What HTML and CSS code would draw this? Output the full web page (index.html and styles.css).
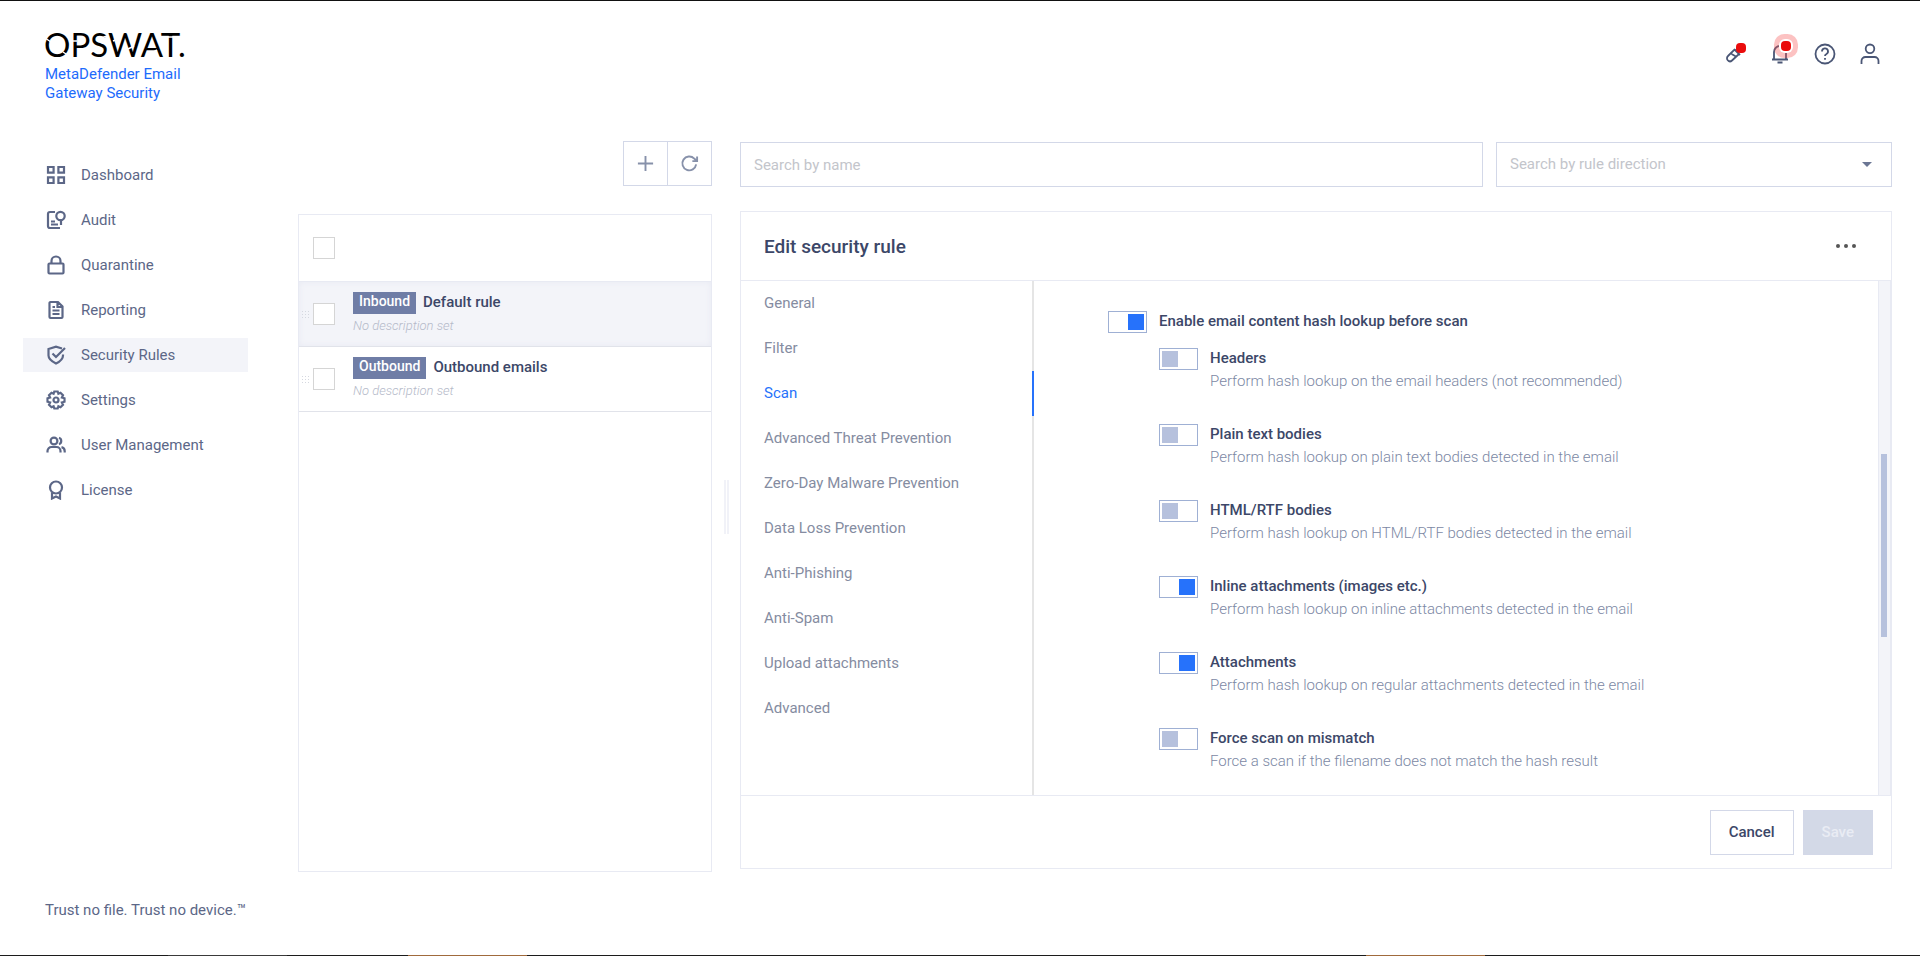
FILE: index.html
```html
<!DOCTYPE html>
<html lang="en">
<head>
    <meta charset="UTF-8">
    <meta name="viewport" content="width=device-width, initial-scale=1.0">
    <title>Security Rules - MetaDefender Email Gateway Security</title>
    <link rel="stylesheet" href="styles.css">
</head>
<body>
    <div class="app">
        <aside class="sidebar">
            <div class="brand">
                <svg class="logo" width="160" height="26" viewBox="0 0 160 26" role="img" aria-label="OPSWAT">
                    <text x="0" y="25">OPSWAT.</text>
                    <path class="cut" d="M1 6l6 4M19 20l6 4M28 9h5M48 18l6-3M57 6l6-2M69 9l7-3M84 17l6-3M106 22l7-4M114 5h18"/>
                </svg>
                <p class="product">MetaDefender Email<br>Gateway Security</p>
            </div>
            <nav class="menu">
                <a href="#">
                    <svg class="icon" viewBox="0 0 20 20"><path d="M2 2h5.600v5.600H2zM12.400 2H18v5.600h-5.600zM2 12.400h5.600V18H2zM12.400 12.400H18V18h-5.600z"/></svg>
                    Dashboard
                </a>
                <a href="#">
                    <svg class="icon" viewBox="0 0 20 20"><path d="M9 2H4a2 2 0 0 0-2 2v12a2 2 0 0 0 2 2h10M5 11.500h4M5 14.500h7M15 10.500V15"/><circle cx="14.500" cy="6" r="4.200"/></svg>
                    Audit
                </a>
                <a href="#">
                    <svg class="icon" viewBox="0 0 20 20"><rect x="2.500" y="8.500" width="15" height="10" rx="1"/><path d="M5.500 8.500V6a4.500 4.500 0 0 1 9 0v2.500"/></svg>
                    Quarantine
                </a>
                <a href="#">
                    <svg class="icon" viewBox="0 0 20 20"><path d="M12 2H4.500a1 1 0 0 0-1 1v14a1 1 0 0 0 1 1h11a1 1 0 0 0 1-1V6.500zM11.500 2v5h5M6.500 7h2.500M6.500 10.500h7M6.500 14h7"/></svg>
                    Reporting
                </a>
                <a href="#" class="active">
                    <svg class="icon" viewBox="0 0 20 20"><path d="M16 3.500L10 1.600 2.500 4v6.500c0 4 4 6.300 7.500 8 3.500-1.700 7-4 7-8V9.500M6.500 8.500l3.500 3.500 9-9"/></svg>
                    Security Rules
                </a>
                <a href="#">
                    <svg class="icon" viewBox="0 0 20 20"><path d="M8.300 1.500h3.400l.7 2.300 2.100-1 2.500 2.500-1.100 2.200 2.600.8v3.400l-2.600.8 1.100 2.200-2.500 2.500-2.100-1-.7 2.300H8.300l-.7-2.300-2.100 1L3 14.700l1.100-2.200-2.600-.8V8.300l2.600-.8L3 5.300l2.500-2.500 2.100 1z"/><circle cx="10" cy="10" r="2.500"/></svg>
                    Settings
                </a>
                <a href="#">
                    <svg class="icon" viewBox="0 0 20 20"><circle cx="8" cy="6" r="3.400"/><path d="M1.500 17.500v-1.500a4 4 0 0 1 4-4h5a4 4 0 0 1 4 4v1.500M13 2.800a3.400 3.400 0 0 1 0 6.400M15.500 12.200a4 4 0 0 1 3.200 4v1.300"/></svg>
                    User Management
                </a>
                <a href="#">
                    <svg class="icon" viewBox="0 0 20 20"><circle cx="10" cy="7.500" r="6"/><path d="M6 12.500V18.500l4-2 4 2v-6"/></svg>
                    License
                </a>
            </nav>
            <p class="slogan">Trust no file. Trust no device.™</p>
        </aside>

        <div class="content">
            <header class="topbar">
                <button class="top-icon" aria-label="Maintenance">
                    <svg viewBox="0 0 24 24"><path d="M12 8l5 5M13.500 8.500l-2-1L5 14a2.800 2.800 0 0 0 4 4.500l7-6.500M8.500 12l4.500 2.500"/></svg>
                    <span class="dot"></span>
                </button>
                <button class="top-icon" aria-label="Notifications">
                    <svg viewBox="0 0 24 24"><path d="M4 17.500h16M6 17V10a6 6 0 0 1 12 0v7M9.500 20.500h5"/></svg>
                    <span class="dot pulse"></span>
                </button>
                <button class="top-icon" aria-label="Help">
                    <svg viewBox="0 0 24 24"><circle cx="12" cy="12" r="9.500"/><path d="M9 9.500a3 3 0 1 1 4.200 2.700c-.8.400-1.200.8-1.200 1.800M12 16v1.800"/></svg>
                </button>
                <button class="top-icon" aria-label="Account">
                    <svg viewBox="0 0 24 24"><circle cx="12" cy="6.800" r="4.300"/><path d="M3.500 22v-3a4 4 0 0 1 4-4h9a4 4 0 0 1 4 4v3"/></svg>
                </button>
            </header>

            <main class="main">
                <section class="rules">
                    <div class="tools">
                        <button aria-label="Add rule">
                            <svg viewBox="0 0 20 20"><path d="M10 2v16M2 10h16"/></svg>
                        </button>
                        <button aria-label="Refresh">
                            <svg viewBox="0 0 20 20"><path d="M17 11a7.300 7.300 0 1 1-2-6.200l2.500 2.400M18 2.500v5h-5"/></svg>
                        </button>
                    </div>
                    <div class="list">
                        <div class="list-head">
                            <input type="checkbox" class="check" aria-label="Select all rules">
                        </div>
                        <div class="rule selected">
                            <span class="grip"></span>
                            <input type="checkbox" class="check" aria-label="Select Default rule">
                            <div class="rule-info">
                                <div class="rule-name"><span class="badge">Inbound</span>Default rule</div>
                                <div class="rule-desc">No description set</div>
                            </div>
                        </div>
                        <div class="rule">
                            <span class="grip"></span>
                            <input type="checkbox" class="check" aria-label="Select Outbound emails">
                            <div class="rule-info">
                                <div class="rule-name"><span class="badge">Outbound</span>Outbound emails</div>
                                <div class="rule-desc">No description set</div>
                            </div>
                        </div>
                    </div>
                </section>

                <div class="resizer"><span></span></div>

                <section class="editor">
                    <div class="filters">
                        <input type="text" class="search" placeholder="Search by name" aria-label="Search by name">
                        <div class="direction">
                            <select aria-label="Search by rule direction">
                                <option>Search by rule direction</option>
                                <option>Inbound</option>
                                <option>Outbound</option>
                            </select>
                        </div>
                    </div>

                    <div class="panel">
                        <div class="panel-head">
                            <h1>Edit security rule</h1>
                            <button class="more" aria-label="More"><i></i><i></i><i></i></button>
                        </div>
                        <div class="panel-body">
                            <nav class="tabs">
                                <a href="#">General</a>
                                <a href="#">Filter</a>
                                <a href="#" class="active">Scan</a>
                                <a href="#">Advanced Threat Prevention</a>
                                <a href="#">Zero-Day Malware Prevention</a>
                                <a href="#">Data Loss Prevention</a>
                                <a href="#">Anti-Phishing</a>
                                <a href="#">Anti-Spam</a>
                                <a href="#">Upload attachments</a>
                                <a href="#">Advanced</a>
                            </nav>
                            <div class="options">
                                <div class="option">
                                    <input type="checkbox" class="toggle" id="hash-lookup" checked>
                                    <label for="hash-lookup">Enable email content hash lookup before scan</label>
                                </div>
                                <div class="sub-options">
                                    <div class="option">
                                        <input type="checkbox" class="toggle" id="headers">
                                        <div>
                                            <label for="headers">Headers</label>
                                            <p>Perform hash lookup on the email headers (not recommended)</p>
                                        </div>
                                    </div>
                                    <div class="option">
                                        <input type="checkbox" class="toggle" id="plain-text">
                                        <div>
                                            <label for="plain-text">Plain text bodies</label>
                                            <p>Perform hash lookup on plain text bodies detected in the email</p>
                                        </div>
                                    </div>
                                    <div class="option">
                                        <input type="checkbox" class="toggle" id="html-rtf">
                                        <div>
                                            <label for="html-rtf">HTML/RTF bodies</label>
                                            <p>Perform hash lookup on HTML/RTF bodies detected in the email</p>
                                        </div>
                                    </div>
                                    <div class="option">
                                        <input type="checkbox" class="toggle" id="inline" checked>
                                        <div>
                                            <label for="inline">Inline attachments (images etc.)</label>
                                            <p>Perform hash lookup on inline attachments detected in the email</p>
                                        </div>
                                    </div>
                                    <div class="option">
                                        <input type="checkbox" class="toggle" id="attachments" checked>
                                        <div>
                                            <label for="attachments">Attachments</label>
                                            <p>Perform hash lookup on regular attachments detected in the email</p>
                                        </div>
                                    </div>
                                    <div class="option">
                                        <input type="checkbox" class="toggle" id="force-scan">
                                        <div>
                                            <label for="force-scan">Force scan on mismatch</label>
                                            <p>Force a scan if the filename does not match the hash result</p>
                                        </div>
                                    </div>
                                </div>
                            </div>
                            <div class="scrollbar"><span></span></div>
                        </div>
                        <div class="panel-foot">
                            <button class="btn">Cancel</button>
                            <button class="btn btn-save" disabled>Save</button>
                        </div>
                    </div>
                </section>
            </main>
        </div>
    </div>
    <div class="edge"></div>
</body>
</html>
```

FILE: styles.css
```css
* {
    box-sizing: border-box;
}
body {
    margin: 0;
    min-height: 100vh;
    display: flex;
    flex-direction: column;
    border-top: 1px solid #111;
    background: #fff;
    color: #3c4768;
    font-family: Roboto, "Liberation Sans", sans-serif;
    font-size: 15px;
    line-height: 23px;
}
p, h1 {
    margin: 0;
}
a {
    color: inherit;
    text-decoration: none;
}
button {
    padding: 0;
    border: none;
    background: none;
    font: inherit;
    color: inherit;
}
svg {
    fill: none;
    stroke: currentColor;
}
.app {
    flex: 1;
    display: flex;
}
.edge {
    height: 1px;
    background: linear-gradient(to right, #1c1c1c 168px, #3a3a3a 168px, #3a3a3a 287px, #1c1c1c 287px, #1c1c1c 408px, #a06a3c 408px, #a06a3c 527px, #1c1c1c 527px, #1c1c1c 1366px, #a06a3c 1366px, #a06a3c 1485px, #1c1c1c 1485px);
}

/* Sidebar */
.sidebar {
    width: 248px;
    padding: 31px 0 35px 23px;
    display: flex;
    flex-direction: column;
}
.brand {
    height: 126px;
    padding-left: 22px;
}
.logo {
    display: block;
    margin-left: -1px;
}
.logo text {
    font-family: Lato, sans-serif;
    font-size: 33px;
    fill: #000;
    stroke: none;
}
.logo .cut {
    stroke: #fff;
    stroke-width: 1.5;
}
.product {
    margin-top: 7px;
    color: #1d6bfc;
    font-size: 15px;
    line-height: 19px;
}
.menu {
    display: flex;
    flex-direction: column;
    gap: 11px;
    color: #5c6787;
}
.menu a {
    display: flex;
    align-items: center;
    gap: 15px;
    height: 34px;
    padding-left: 23px;
}
.menu a.active {
    background: #f3f4f9;
}
.icon {
    width: 20px;
    height: 20px;
    stroke-width: 2.2;
}
.slogan {
    margin-top: auto;
    padding-left: 22px;
    color: #5c6787;
    line-height: 20px;
}

/* Top bar */
.content {
    flex: 1;
    min-width: 0;
    display: flex;
    flex-direction: column;
    padding: 0 28px 83px 50px;
}
.topbar {
    height: 140px;
    display: flex;
    justify-content: flex-end;
    gap: 21px;
    padding: 41px 10px 0 0;
}
.top-icon {
    position: relative;
    width: 24px;
    height: 24px;
    color: #4a5675;
}
.top-icon svg {
    display: block;
    stroke-width: 1.8;
}
.dot {
    position: absolute;
    top: 1px;
    right: 1px;
    width: 10px;
    height: 10px;
    border-radius: 4px;
    background: #ea0c0c;
}
.dot.pulse {
    top: -1px;
    box-shadow: 0 0 0 2px #fff, 0 0 0 7px rgba(245, 80, 80, 0.35);
}

/* Rule list */
.main {
    flex: 1;
    display: flex;
}
.rules {
    width: 414px;
    display: flex;
    flex-direction: column;
    gap: 28px;
}
.tools {
    display: flex;
    justify-content: flex-end;
}
.tools button {
    width: 45px;
    height: 45px;
    display: flex;
    align-items: center;
    justify-content: center;
    border: 1px solid #d3d8e8;
    color: #8791aa;
}
.tools button + button {
    margin-left: -1px;
}
.tools svg {
    width: 19px;
    height: 19px;
    stroke-width: 2;
}
.list {
    flex: 1;
    border: 1px solid #e8eaf3;
}
.list-head {
    height: 67px;
    display: flex;
    align-items: center;
    padding-left: 14px;
    border-bottom: 1px solid #e8eaf3;
}
.check {
    appearance: none;
    flex: none;
    width: 22px;
    height: 22px;
    margin: 0;
    border: 1px solid #d5d5d5;
    background: #fff;
}
.rule {
    height: 65px;
    display: flex;
    align-items: center;
    border-bottom: 1px solid #e1e3ea;
}
.rule.selected {
    background: #f3f4f9;
    box-shadow: inset 0 0 6px #e8eaf3;
}
.grip {
    width: 8px;
    height: 8px;
    margin: 0 4px 0 2px;
    background: radial-gradient(circle, #d5d8e0 1px, transparent 1px) 0 0 / 3px 3px;
}
.rule-info {
    margin-left: 18px;
}
.rule-name {
    display: flex;
    align-items: center;
    gap: 7px;
    font-weight: 500;
}
.badge {
    height: 22px;
    padding: 0 6px;
    background: #6f7da6;
    color: #fff;
    font-size: 14px;
    line-height: 19px;
}
.rule-desc {
    color: #b5bac9;
    font-size: 13px;
    font-style: italic;
    font-weight: 300;
}
.resizer {
    width: 28px;
    display: flex;
    align-items: center;
    padding-left: 12px;
}
.resizer span {
    width: 5px;
    height: 54px;
    border: 2px solid #f1f2f8;
    border-width: 0 2px;
}

/* Editor */
.editor {
    flex: 1;
    min-width: 0;
    display: flex;
    flex-direction: column;
    gap: 24px;
    padding: 1px 0 3px;
}
.filters {
    display: flex;
    gap: 13px;
}
.search, .direction select {
    height: 45px;
    padding: 0 13px;
    border: 1px solid #d3d8e8;
    background: #fff;
    font: inherit;
    color: #c3c5cb;
}
.search {
    flex: 1;
}
.search::placeholder {
    color: #c3c5cb;
}
.direction {
    position: relative;
    width: 396px;
}
.direction select {
    appearance: none;
    width: 100%;
}
.direction::after {
    content: "";
    position: absolute;
    top: 20px;
    right: 20px;
    border: 5px solid transparent;
    border-top-color: #6b7694;
    border-bottom: none;
}
.panel {
    flex: 1;
    display: flex;
    flex-direction: column;
    border: 1px solid #e8eaf3;
}
.panel-head {
    height: 69px;
    display: flex;
    align-items: center;
    justify-content: space-between;
    padding: 0 35px 0 23px;
    border-bottom: 1px solid #e8eaf3;
}
h1 {
    font-size: 19px;
    font-weight: 500;
}
.more {
    display: flex;
    gap: 4px;
}
.more i {
    width: 4px;
    height: 4px;
    border-radius: 2px;
    background: #555;
}
.panel-body {
    flex: 1;
    display: flex;
}
.tabs {
    width: 293px;
    border-right: 2px solid #e5e5e5;
    color: #858ca1;
}
.tabs a {
    display: block;
    height: 45px;
    margin-right: -2px;
    padding-left: 23px;
    line-height: 45px;
}
.tabs a.active {
    border-right: 2px solid #2672fb;
    color: #2672fb;
}
.options {
    flex: 1;
    padding: 29px 0 20px 74px;
}
.option {
    display: flex;
    gap: 12px;
}
.option label {
    display: block;
    font-weight: 500;
}
.option p {
    color: #7c88a4;
    font-weight: 300;
}
.sub-options {
    display: flex;
    flex-direction: column;
    gap: 30px;
    padding: 14px 0 0 51px;
}
.toggle {
    appearance: none;
    flex: none;
    width: 39px;
    height: 22px;
    margin: 1px 0 0;
    padding: 2px;
    border: 1px solid #9fb0d4;
    background: #fff;
}
.toggle::before {
    content: "";
    display: block;
    width: 16px;
    height: 16px;
    background: #b6c1dd;
}
.toggle:checked::before {
    margin-left: auto;
    background: #2672fb;
}
.scrollbar {
    width: 13px;
    padding: 173px 3px 0 2px;
    border-left: 1px solid #e8eaf3;
    border-right: 1px solid #e8eaf3;
    background: #f3f4f9;
}
.scrollbar span {
    display: block;
    height: 183px;
    background: #b6c1dd;
}
.panel-foot {
    height: 73px;
    display: flex;
    justify-content: flex-end;
    gap: 9px;
    padding: 14px 18px 0 0;
    border-top: 1px solid #e8eaf3;
}
.btn {
    height: 45px;
    padding: 0 18px;
    border: 1px solid #d3d8e8;
    font-weight: 500;
}
.btn-save {
    background: #d3d9e7;
    color: #e9ecf4;
}
```
